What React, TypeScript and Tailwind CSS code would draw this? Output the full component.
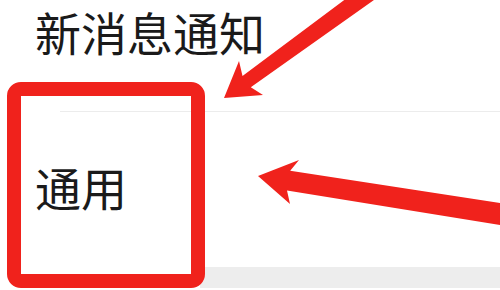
export default function App() {
  return (
    <div className="relative flex h-[290px] w-[500px] flex-col overflow-hidden bg-white font-['Noto_Sans_CJK_SC',sans-serif] text-[#1a1a1a]">
      <div className="h-[111px] pl-[35px] pt-px text-[46px] leading-[60px]">新消息通知</div>
      <div className="ml-[60px] h-px bg-[#ececec]" />
      <div className="flex flex-1 items-center pb-[8px] pl-[35px] text-[46px] leading-[60px]">通用</div>
      <div className="ml-[200px] h-[21px] bg-[#ededed]" />
      <div className="h-[2px] bg-white" />

      {/* annotation box */}
      <div className="pointer-events-none absolute left-[7px] top-[82px] h-[206px] w-[198px] rounded-[14px] border-[14px] border-[#f0221c]" />

      {/* annotation arrows */}
      <svg className="pointer-events-none absolute inset-0" width="500" height="290" viewBox="0 0 500 290">
        <polygon
          fill="#f0221c"
          points="224,98 239,61 242.5,75.9 372.4,-21 383,-6.4 250.8,87.2 263,95"
        />
        <polygon
          fill="#f0221c"
          points="258,176 299,160 290.2,170.8 527.5,207.2 524.1,229 287,190.6 290,204"
        />
      </svg>
    </div>
  );
}
